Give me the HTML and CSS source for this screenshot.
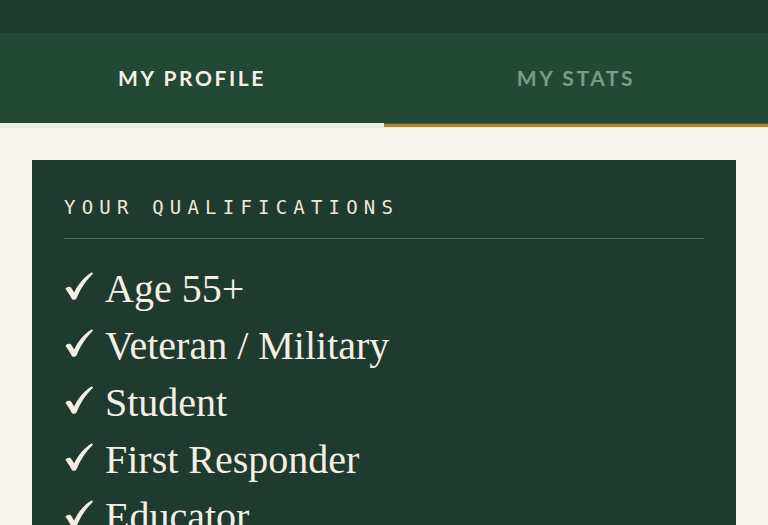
FILE: index.html
```html
<!DOCTYPE html>
<html lang="en">
<head>
<meta charset="utf-8">
<title>My Profile</title>
<link rel="stylesheet" href="styles.css">
</head>
<body>
<div class="topbar"></div>
<nav class="tabs">
  <div class="tab tab-active">MY PROFILE</div>
  <div class="tab tab-inactive">MY STATS</div>
</nav>
<div class="tab-rule">
  <div class="rule-left"></div>
  <div class="rule-right"></div>
</div>
<main class="content">
  <section class="card">
    <h2 class="card-title">YOUR QUALIFICATIONS</h2>
    <ul class="quals">
      <li><svg class="check" viewBox="0 0 30 30" aria-hidden="true"><path d="M0.5 18 C2 15.5 5.5 15 7 17.5 L9.8 22 C14 13 20.5 5 28.8 0.2 L30 1.8 C23 8.5 17 17 12.3 28.3 C11 30.2 8 30.3 7 28.4 C5 24.5 3 21.5 0.5 18 Z"/></svg><span class="qual-text">Age 55+</span></li>
      <li><svg class="check" viewBox="0 0 30 30" aria-hidden="true"><path d="M0.5 18 C2 15.5 5.5 15 7 17.5 L9.8 22 C14 13 20.5 5 28.8 0.2 L30 1.8 C23 8.5 17 17 12.3 28.3 C11 30.2 8 30.3 7 28.4 C5 24.5 3 21.5 0.5 18 Z"/></svg><span class="qual-text">Veteran / Military</span></li>
      <li><svg class="check" viewBox="0 0 30 30" aria-hidden="true"><path d="M0.5 18 C2 15.5 5.5 15 7 17.5 L9.8 22 C14 13 20.5 5 28.8 0.2 L30 1.8 C23 8.5 17 17 12.3 28.3 C11 30.2 8 30.3 7 28.4 C5 24.5 3 21.5 0.5 18 Z"/></svg><span class="qual-text">Student</span></li>
      <li><svg class="check" viewBox="0 0 30 30" aria-hidden="true"><path d="M0.5 18 C2 15.5 5.5 15 7 17.5 L9.8 22 C14 13 20.5 5 28.8 0.2 L30 1.8 C23 8.5 17 17 12.3 28.3 C11 30.2 8 30.3 7 28.4 C5 24.5 3 21.5 0.5 18 Z"/></svg><span class="qual-text">First Responder</span></li>
      <li><svg class="check" viewBox="0 0 30 30" aria-hidden="true"><path d="M0.5 18 C2 15.5 5.5 15 7 17.5 L9.8 22 C14 13 20.5 5 28.8 0.2 L30 1.8 C23 8.5 17 17 12.3 28.3 C11 30.2 8 30.3 7 28.4 C5 24.5 3 21.5 0.5 18 Z"/></svg><span class="qual-text">Educator</span></li>
    </ul>
  </section>
</main>
</body>
</html>
```
FILE: styles.css
```css
html, body {
  margin: 0;
  padding: 0;
}
body {
  background: #f6f4ef;
  height: 525px;
  overflow: hidden;
}
.topbar {
  height: 33px;
  background: #1f3a2e;
}
.tabs {
  display: grid;
  grid-template-columns: 1fr 1fr;
  height: 90px;
  background: #234936;
}
.tab {
  display: flex;
  align-items: center;
  justify-content: center;
  font-family: Lato, "Liberation Sans", sans-serif;
  font-weight: 700;
  font-size: 21px;
  letter-spacing: 2.6px;
  padding-bottom: 1px;
}
.tab-active {
  color: #f3efe4;
}
.tab-inactive {
  color: #7d9a88;
}
.tab-rule {
  display: grid;
  grid-template-columns: 1fr 1fr;
  height: 5px;
}
.rule-left {
  background: #efebe2;
}
.rule-right {
  background: linear-gradient(#5c5a2c 0 1px, #b08a2c 1px 4px, #efe6cc 4px 5px);
}
.content {
  padding: 32px 32px 0;
}
.card {
  background: #1f3a2e;
  padding: 35px 32px 0;
  height: 400px;
}
.card-title {
  margin: 0;
  font-family: "DejaVu Sans Mono", "Liberation Mono", monospace;
  font-weight: 400;
  font-size: 19px;
  line-height: 24px;
  letter-spacing: 6.2px;
  color: #ebe7da;
  padding-bottom: 19px;
  border-bottom: 1px solid #4b6b5a;
}
.quals {
  list-style: none;
  margin: 21px 0 0;
  padding: 0;
}
.quals li {
  display: flex;
  align-items: flex-start;
  gap: 12px;
  height: 57px;
  font-family: "Liberation Serif", serif;
  font-size: 40px;
  line-height: 57px;
  color: #f3efe4;
  white-space: nowrap;
}
.check {
  width: 28px;
  height: 28px;
  fill: #f3efe4;
  flex: none;
  margin: 12px 0 0 1px;
}
```
